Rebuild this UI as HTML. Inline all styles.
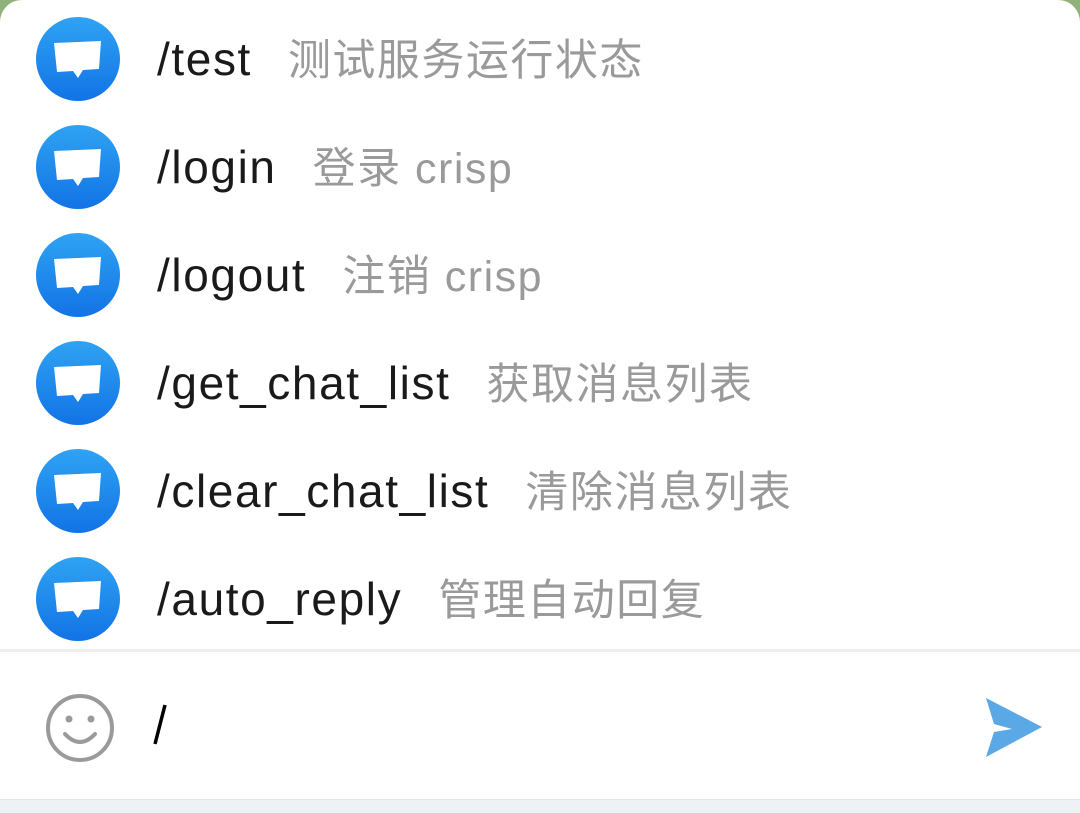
<!DOCTYPE html>
<html><head><meta charset="utf-8"><style>
body{margin:0;width:1080px;height:812px;overflow:hidden;background:#8fb27a;font-family:"Liberation Sans","Noto Sans CJK SC",sans-serif;position:relative}
.panel{position:absolute;left:0;top:0;width:1080px;height:812px;background:#fff;border-radius:22px 22px 0 0}
.row{position:absolute;left:0;height:108px;width:1080px}
.ic{position:absolute;left:36px;top:17px;width:84px;height:84px;border-radius:50%;background:linear-gradient(#2fa3f3,#1273e5)}
.ic svg{position:absolute;left:0;top:0}
.cmd{position:absolute;left:157px;top:33px;font-size:46px;letter-spacing:1.6px;color:#1a1a1a;white-space:nowrap;line-height:52px}
.cmd span{color:#9a9a9a;font-size:43px;letter-spacing:1.5px;margin-left:36px}
.div{position:absolute;left:0;top:649px;width:1080px;height:3px;background:#eeeeee}
.bot{position:absolute;left:0;top:799px;width:1080px;height:13px;background:#eef2f7;border-top:1px solid #e2e6ec}
</style></head><body>
<div class="panel">
<div class="row" style="top:0"><div class="ic"><svg width="84" height="84"><path d="M18 26 L65 24 L63 52 L47 53 L42 61 L37 54 L21 55 Z" fill="#fff"/></svg></div><div class="cmd">/test<span>测试服务运行状态</span></div></div>
<div class="row" style="top:108px"><div class="ic"><svg width="84" height="84"><path d="M18 26 L65 24 L63 52 L47 53 L42 61 L37 54 L21 55 Z" fill="#fff"/></svg></div><div class="cmd">/login<span>登录 crisp</span></div></div>
<div class="row" style="top:216px"><div class="ic"><svg width="84" height="84"><path d="M18 26 L65 24 L63 52 L47 53 L42 61 L37 54 L21 55 Z" fill="#fff"/></svg></div><div class="cmd">/logout<span>注销 crisp</span></div></div>
<div class="row" style="top:324px"><div class="ic"><svg width="84" height="84"><path d="M18 26 L65 24 L63 52 L47 53 L42 61 L37 54 L21 55 Z" fill="#fff"/></svg></div><div class="cmd">/get_chat_list<span>获取消息列表</span></div></div>
<div class="row" style="top:432px"><div class="ic"><svg width="84" height="84"><path d="M18 26 L65 24 L63 52 L47 53 L42 61 L37 54 L21 55 Z" fill="#fff"/></svg></div><div class="cmd">/clear_chat_list<span>清除消息列表</span></div></div>
<div class="row" style="top:540px"><div class="ic"><svg width="84" height="84"><path d="M18 26 L65 24 L63 52 L47 53 L42 61 L37 54 L21 55 Z" fill="#fff"/></svg></div><div class="cmd">/auto_reply<span>管理自动回复</span></div></div>
<div class="div"></div>
<svg style="position:absolute;left:40px;top:690px" width="80" height="80"><circle cx="40" cy="38" r="32" fill="none" stroke="#9a9a9a" stroke-width="4"/><circle cx="29" cy="29" r="3.5" fill="#9a9a9a"/><circle cx="51" cy="29" r="3.5" fill="#9a9a9a"/><path d="M25 44 Q40 60 55 44" fill="none" stroke="#9a9a9a" stroke-width="4" stroke-linecap="round"/></svg>
<svg style="position:absolute;left:150px;top:700px" width="20" height="50"><path d="M15 5 L5 44" stroke="#000" stroke-width="3.5"/></svg>
<svg style="position:absolute;left:980px;top:694px" width="70" height="66"><path d="M6 4 L62 33 L6 63 L14 38 L32 35 L14 30 Z" fill="#5aa9e6"/></svg>
<div class="bot"></div>
</div>
</body></html>
